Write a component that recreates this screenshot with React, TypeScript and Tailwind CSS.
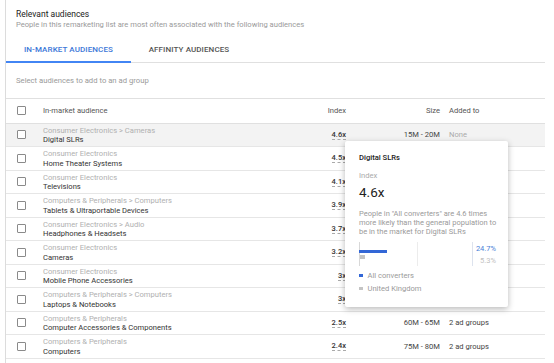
import React from "react";

type Row = { cat: string; name: string; idx: string; size?: string; added?: string; addedGray?: boolean; hl?: boolean };

const rows: Row[] = [
  { cat: "Consumer Electronics > Cameras", name: "Digital SLRs", idx: "4.6x", size: "15M - 20M", added: "None", addedGray: true, hl: true },
  { cat: "Consumer Electronics", name: "Home Theater Systems", idx: "4.5x" },
  { cat: "Consumer Electronics", name: "Televisions", idx: "4.1x" },
  { cat: "Computers & Peripherals > Computers", name: "Tablets & Ultraportable Devices", idx: "3.9x" },
  { cat: "Consumer Electronics > Audio", name: "Headphones & Headsets", idx: "3.7x" },
  { cat: "Consumer Electronics", name: "Cameras", idx: "3.2x" },
  { cat: "Consumer Electronics", name: "Mobile Phone Accessories", idx: "3x" },
  { cat: "Computers & Peripherals > Computers", name: "Laptops & Notebooks", idx: "3x" },
  { cat: "Computers & Peripherals", name: "Computer Accessories & Components", idx: "2.5x", size: "60M - 65M", added: "2 ad groups" },
  { cat: "Computers & Peripherals", name: "Computers", idx: "2.4x", size: "75M - 80M", added: "2 ad groups" },
];

function Box() {
  return <div className="w-[9px] h-[9px] border border-[#8a8a8a] rounded-[1px] bg-white" />;
}

export default function App() {
  return (
    <div className="relative w-[554px] h-[363px] overflow-hidden bg-white font-['Roboto',sans-serif] text-[#333]">
      <div className="ml-[5px] w-[540px] h-full border-l border-[#dcdcdc]">
        <div className="pl-[10px] pt-[9px]">
          <div className="text-[8.5px] leading-[11px] text-[#222]">Relevant audiences</div>
          <div className="text-[7.6px] leading-[9px] text-[#9a9a9a]">
            People in this remarketing list are most often associated with the following audiences
          </div>
        </div>
        <div className="mt-[9px] flex h-[25px] border-b border-[#e0e0e0]">
          <div className="relative w-[125px] flex items-center justify-center text-[8px] font-medium text-[#3c78d8] tracking-[0.1px]">
            IN-MARKET AUDIENCES
            <div className="absolute left-0 right-0 bottom-[-1px] h-[2px] bg-[#4285f4]" />
          </div>
          <div className="w-[116px] flex items-center justify-center text-[8px] font-medium text-[#555] tracking-[0.1px]">
            AFFINITY AUDIENCES
          </div>
        </div>
        <div className="h-[36px] flex items-center pl-[10px] border-b border-[#e0e0e0] text-[7.7px] text-[#9a9a9a]">
          Select audiences to add to an ad group
        </div>
        <div className="h-[24.5px] flex items-center border-b border-[#e0e0e0] text-[7.6px] text-[#555]">
          <div className="w-[37px] pl-[11px] flex items-center"><Box /></div>
          <div className="w-[263px]">In-market audience</div>
          <div className="w-[40px] text-right">Index</div>
          <div className="w-[94px] text-right">Size</div>
          <div className="pl-[9px]">Added to</div>
        </div>
        {rows.map((r, i) => (
          <div
            key={i}
            className={`h-[23.5px] flex items-center border-b border-[#e6e6e6] ${r.hl ? "bg-[#f3f3f3]" : ""}`}
          >
            <div className="w-[37px] pl-[11px] flex items-center"><Box /></div>
            <div className="w-[263px] leading-[9.5px] pt-[1px]">
              <div className="text-[7.6px] text-[#b0b0b0]">{r.cat}</div>
              <div className="text-[7.6px] text-[#333]">{r.name}</div>
            </div>
            <div className="w-[40px] flex justify-end">
              <span className="text-[7.5px] font-medium text-[#333] leading-[9px] border-b border-dashed border-[#aaa]">{r.idx}</span>
            </div>
            <div className="w-[94px] text-right text-[7.6px] text-[#444]">{r.size ?? ""}</div>
            <div className={`pl-[9px] text-[7.6px] ${r.addedGray ? "text-[#aaa]" : "text-[#444]"}`}>{r.added ?? ""}</div>
          </div>
        ))}
      </div>

      <div className="absolute left-[345px] top-[141px] w-[163px] h-[166px] bg-white rounded-[2px] shadow-[0_2px_6px_rgba(0,0,0,0.28)] px-[14px] pt-[12px]">
        <div className="text-[7.6px] font-medium text-[#222] leading-[10px]">Digital SLRs</div>
        <div className="mt-[8px] text-[7.6px] text-[#aaa] leading-[10px]">Index</div>
        <div className="mt-[3px] text-[13.5px] text-[#222] leading-[16px]">4.6x</div>
        <div className="mt-[9px] text-[7.5px] text-[#9a9a9a] leading-[9px] w-[140px]">
          People in "All converters" are 4.6 times more likely than the general population to be in the market for Digital SLRs
        </div>
        <div className="mt-[6px] relative h-[24px] w-[137px]">
          <div className="absolute left-0 top-0 bottom-0 w-px bg-[#d8d8d8]" />
          <div className="absolute left-[58px] top-0 bottom-0 w-px bg-[#ececec]" />
          <div className="absolute left-[113px] top-0 bottom-0 w-px bg-[#dde3ee]" />
          <div className="absolute left-0 top-[8px] w-[28px] h-[3px] bg-[#3367d6]" />
          <div className="absolute left-[1px] top-[13px] w-[5px] h-[4px] bg-[#c4c4c4]" />
          <div className="absolute right-0 top-[2px] text-[7.5px] leading-[9px] text-[#4a7fd8]">24.7%</div>
          <div className="absolute right-0 top-[14px] text-[7.5px] leading-[9px] text-[#c0c0c0]">5.3%</div>
        </div>
        <div className="mt-[3px] flex items-center gap-[5px] text-[7.6px] leading-[13px] text-[#9a9a9a]">
          <div className="w-[3.5px] h-[3.5px] bg-[#3367d6]" />All converters
        </div>
        <div className="flex items-center gap-[5px] text-[7.6px] leading-[13px] text-[#9a9a9a]">
          <div className="w-[3.5px] h-[3.5px] bg-[#c4c4c4]" />United Kingdom
        </div>
      </div>
    </div>
  );
}
